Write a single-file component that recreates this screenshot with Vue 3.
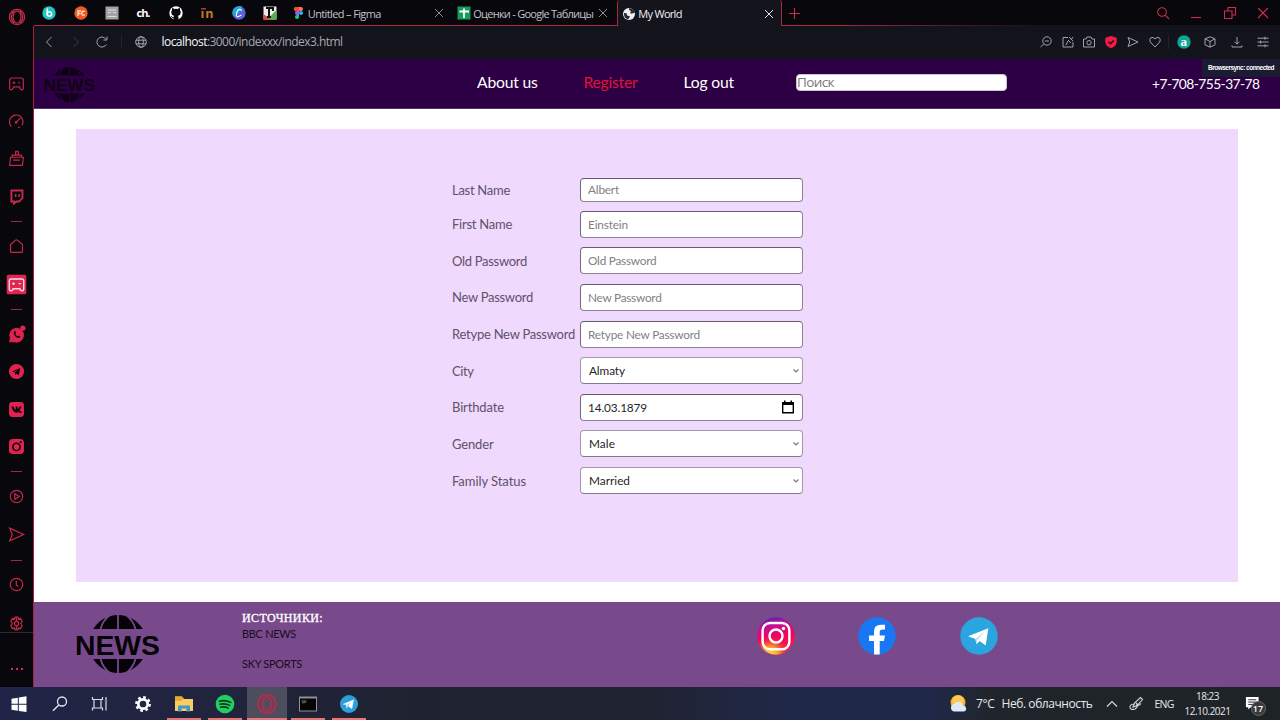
<script setup>
// Spreads a label's letters so that it occupies the given width in pixels.
const vFit = {
  mounted(el, { value }) {
    const count = el.textContent.length
    const width = el.getBoundingClientRect().width
    el.style.letterSpacing = (value - width) / count + 'px'
  },
}

const sideGroups = [
  [
    '<path d="M4.500 3.500h11q2.500 0 2.500 2.500v9q0 2.500-2 2.500-1.500 0-2.500-3.500h-7q-1 3.500-2.500 3.500-2 0-2-2.500V6q0-2.500 2.500-2.500z"/><path d="M7 7.500v3M5.500 9h3M13 8v2"/>',
    '<path d="M4 16a8 8 0 1 1 12.500-1.500M14 17h-2"/><path d="M9.500 11l5-5"/><circle cx="9.500" cy="11" r="1"/>',
    '<path d="M3 8.500h15L17 18H2zM5 8.500V6h11v2.500M9 6V1.500h3V6M6 12h8"/>',
    '<path d="M4 3h13v9l-4 4h-3l-3 2v-2H4z" stroke-width="2.300"/><path d="M9 7v3.500M13 7v3.500" stroke-width="1.800"/>',
  ],
  [
    '<path d="M3 8.500q0-1 1-1.700l4.500-4q1.500-1.300 3 0l4.500 4q1 .7 1 1.700V16q0 1-1 1H4q-1 0-1-1z"/>',
    '<rect x="-1.500" y="-1.500" width="23" height="23" rx="1.800" fill="#dc2752" stroke="none"/><path d="M3.500 3.500h13q2 0 2 2.500v9q0 2.500-2 2.500t-2.500-2.500H6q-.5 2.500-2.500 2.500t-2-2.500V6q0-2.500 2-2.500z" stroke="#ffd8e0" stroke-width="1.600"/><path d="M6.500 7.500v3M5 9h3M12.500 9h2.500" stroke="#ffd8e0" stroke-width="1.600"/>',
  ],
  [
    '<path d="M2 18.500l1-4A8 8 0 1 1 7 18.200z" fill="#e0244f"/><path d="M7 6.500q-1 3 1.500 5.500t5 2l1-1.500-2-1.300-1.300 1q-2.200-1-2.700-3l1-1.200L8.500 6z" fill="#16040c" stroke="none"/><circle cx="17.500" cy="2.500" r="3" fill="#e0244f" stroke="none"/>',
    '<circle cx="10" cy="10" r="8.900" fill="#e0244f" stroke="none"/><path d="M4.500 10L14.500 6l-1.800 8.500-3-2-1.500 1.500-.3-2.800 4-3.500-5 3z" fill="#16040c" stroke="none"/>',
    '<rect x="1.200" y="1.200" width="17.600" height="17.600" rx="4" fill="#e0244f" stroke="none"/><path d="M4 6.500h2.500q1 3 2.500 4v-4h2.300v3.200q1.500-1 2.500-3.200H16q-.7 2.300-2.500 3.700Q15.500 12 16.500 14H13.500q-1-1.500-2.200-2v2Q5.500 14 4 6.500z" fill="#16040c" stroke="none"/>',
    '<rect x="1.200" y="1.200" width="17.600" height="17.600" rx="4.500" fill="#e0244f" stroke="none"/><circle cx="10" cy="10.500" r="4.300" stroke="#16040c" stroke-width="2"/><circle cx="15" cy="4.700" r="1.300" fill="#16040c" stroke="none"/>',
  ],
  [
    '<circle cx="10" cy="10" r="7.300"/><path d="M8 6.700l5.200 3.300L8 13.300z"/>',
    '<path d="M2 2.500L18.500 10 2 17.500 5 10z"/>',
  ],
  [
    '<circle cx="10" cy="10" r="7.300"/><path d="M9.800 5.500v5l2.500 2"/>',
    '<path d="M8.300 2.500h3.400l.6 2.300 2.200-.9 2.200 3.500L15 10l1.700 2.600-2.200 3.500-2.200-.9-.6 2.300H8.300l-.6-2.300-2.200.9-2.200-3.500L5 10 3.300 7.400l2.200-3.500 2.200.9z"/><circle cx="10" cy="10" r="2.500"/><path d="M10 3v4.500M10 12.500V17"/>',
  ],
]

const pins = [
  '<circle cx="8" cy="8" r="6.700" fill="#20c5c4"/><path d="M6.300 3.500v6.800" stroke="#fff" stroke-width="1.700" fill="none"/><circle cx="8.400" cy="9" r="2.200" stroke="#fff" stroke-width="1.500" fill="none"/>',
  '<circle cx="8" cy="8" r="6.700" fill="#f15a22"/><path d="M5 11V6h3M5 8.500h2.500M11.800 6.500q-3-1-3 1.700t3 1.700" stroke="#ffe4d4" stroke-width="1.300" fill="none"/>',
  '<rect x="1.500" y="1.500" width="13" height="13" fill="#a3a3a3"/><path d="M4 5h8M4 7.500h3M9 7.500h3M3.500 11.500h9" stroke="#ddd" fill="none"/>',
  '<text x="0.500" y="12" fill="#fff" font-size="11" font-weight="700" textLength="14" font-family="Open Sans">ch.</text>',
  '<circle cx="8" cy="8" r="6.700" fill="#fff"/><path d="M5.500 15V12q.2-.8.800-1.200-3-.5-3-3.600 0-1.200.8-2.100-.3-1 .1-2 1 0 2.100.9 1.700-.4 3.400 0 1.100-.9 2.100-.9.400 1 .1 2 .8.900.8 2.100 0 3.100-3 3.600.8.700.8 2v2.200z" fill="#09080d"/><path d="M5.700 12.700q-1.700.3-2.300-1.400" fill="none" stroke="#09080d"/>',
  '<text x="1.500" y="12.500" fill="#c57a22" font-size="12.500" font-weight="700" textLength="13" font-family="Open Sans">ın</text><path d="M2 3.800h5" stroke="#b04a35" stroke-width="1.400"/>',
  '<circle cx="8" cy="8" r="6.700" fill="#5563dc"/><path d="M1.500 6.500a6.700 6.700 0 0 1 10-4.500Q8 10 2.500 11.500 1 9 1.500 6.500z" fill="#24a6d4"/><path d="M10.500 6Q10 3.800 8 4.500T5.500 9t2 2.500T10.500 10" stroke="#fff" stroke-width="1.100" fill="none"/>',
  '<path d="M1.500 1.500h13v13h-13z" fill="#eee"/><path d="M5 14.500h9.500V5z" fill="#5cae4c"/><path d="M1.500 9v5.500h7z" fill="#db4b3b"/><path d="M4 3h7v3M7 3.500V13M5 12h4" stroke="#111" stroke-width="2" fill="none"/>',
]

const barIcons = [
  '<circle cx="9" cy="7" r="4.200"/><path d="M5.800 10l-3.300 3M7 7h4"/>',
  '<path d="M8 3.500H3v9.500h10V8"/><path d="M6 11l2-4M9 3l4 4M8 6l3 3M11 6l2-3"/>',
  '<path d="M2.500 5H5l1-2h4l1 2h2.500v8h-11z"/><circle cx="8" cy="8.700" r="2.200"/>',
  '<path d="M8 2.500l5.200 1.600v4.200q0 3.600-5.200 5.600-5.200-2-5.200-5.600V4.100z" fill="#f5194a" stroke="#f5194a"/><path d="M5.500 7.800l2 2 3.300-3.300" stroke="#26101a" stroke-width="1.500"/>',
  '<path d="M3 3.500L13 8 3 12.500 4.700 8z"/>',
  '<path d="M8 13L3.300 8Q1.800 5.500 3.800 3.700 6.300 2.500 8 5q1.700-2.500 4.200-1.300 2 1.800.5 4.300z"/>',
]
const extIcons = [
  '<circle cx="8" cy="8" r="6.700" fill="#12a594" stroke="none"/><text x="4.600" y="11.800" font-size="13" font-weight="700" font-family="Liberation Serif" fill="#fff" stroke="none">a</text>',
  '<path d="M8 2.800l5 2v6L8 13.200l-5-2.400v-6zM3 4.800L8 7.500l5-2.700M8 7.500v5.700"/>',
  '<path d="M8 3v7M5.500 7.700L8 10.200l2.500-2.500M3 11.500V13h10v-1.500"/>',
  '<path d="M2.500 4.200h11M2.500 8h11M2.500 11.800h11M10 2.700v3M5.500 6.500v3M10 10.300v3"/>',
]

const tasks = [
  { icon: '<path d="M2.500 4.700l6.300-1v6H2.500zM9.800 3.500L17.500 2.300v7.400H9.800zM2.500 10.700h6.300v6l-6.300-1zM9.800 10.700h7.700v7.400L9.800 17z" fill="#fff"/>' },
  { icon: '<circle cx="12" cy="7.500" r="4.500" fill="none" stroke="#e4e4ea" stroke-width="1.300"/><path d="M8.800 11L3 16.800" stroke="#e4e4ea" stroke-width="1.400"/>' },
  { icon: '<path d="M2.500 3V5.500H12.500V3M2.500 16.500v-2.500H12.500v2.500M4 5.500v8.500M11 5.500v8.500M16 3v3M16 8v8.500M14.800 7h2.500" fill="none" stroke="#dcdce4" stroke-width="1.200"/>' },
  { icon: '<circle cx="10" cy="10" r="4.700" fill="none" stroke="#fff" stroke-width="2.700"/><circle cx="10" cy="10" r="6.700" fill="none" stroke="#fff" stroke-width="2.400" stroke-dasharray="2.700 2.562"/>' },
  { icon: '<path d="M1 2.500h7l2 2.500h9v12H1z" fill="#f8cf5f"/><path d="M1 2.500h7l1.500 2.500L7 7H1z" fill="#e7a92e"/><path d="M4 17.500v-6h12v6h-3.500v-3h-5v3z" fill="#4598cb"/>', open: true },
  { icon: '<circle cx="10" cy="10" r="9.300" fill="#1ed15f"/><path d="M4.300 7.200q6-1.600 11.500 1.200M5 10.300q5-1.300 9.600 1.100M5.600 13.200q4-1 7.700.9" fill="none" stroke="#14351f" stroke-width="1.600" stroke-linecap="round"/>', open: true },
  { icon: '<ellipse cx="10" cy="10" rx="9" ry="9.300" fill="none" stroke="#b52c4c" stroke-width="1.700"/><ellipse cx="10" cy="10" rx="4.500" ry="7.200" fill="none" stroke="#b52c4c" stroke-width="1.700"/><path d="M6 3.500q-6 6.500 0 13M14 3.500q6 6.500 0 13" fill="none" stroke="#933049"/>', open: true, active: true },
  { icon: '<path d="M1 2.500h18v15H1z" fill="#8d9094"/><path d="M2 4.500h16v12H2z" fill="#050506"/><path d="M3.500 7h5M4 9l4-1" stroke="#777"/>', open: true },
  { icon: '<circle cx="10" cy="10" r="9" fill="#2b9fd9"/><path d="M3.500 10.200L15 5.500 13 15l-3.700-2.700-1.900 2-.5-3.500z" fill="#fff"/><path d="M7.400 14.300l.2-3 5-3.800-3.600 4.700z" fill="#a9cee4"/>', open: true },
]

const fields = [
  { label: 'Last Name', lw: 58, value: 'Albert', vw: 31, kind: 'hint' },
  { label: 'First Name', lw: 60, value: 'Einstein', vw: 40, kind: 'hint' },
  { label: 'Old Password', lw: 75, value: 'Old Password', vw: 68.500, kind: 'hint' },
  { label: 'New Password', lw: 81, value: 'New Password', vw: 73.500, kind: 'hint' },
  { label: 'Retype New Password', lw: 123, value: 'Retype New Password', vw: 112, kind: 'hint' },
  { label: 'City', lw: 21.500, value: 'Almaty', vw: 36, kind: 'select' },
  { label: 'Birthdate', lw: 52, value: '14.03.1879', vw: 59, kind: 'date' },
  { label: 'Gender', lw: 41.500, value: 'Male', vw: 26, kind: 'select' },
  { label: 'Family Status', lw: 74, value: 'Married', vw: 41, kind: 'select' },
]
</script>

<template>
  <div class="screen">
    <div class="browser">
      <aside class="side">
        <svg class="opera" viewBox="0 0 20 20"><ellipse cx="10" cy="10" rx="7.600" ry="7.600" /><ellipse cx="10" cy="10" rx="4" ry="6.200" /><path d="M7 3.700q-5.500 6 0 12.600M13 3.700q5.500 6 0 12.600" /></svg>
        <template v-for="(group, g) in sideGroups" :key="g">
          <i v-if="g" class="dash"></i>
          <div class="group" :class="{ pair: group.length === 2 }">
            <div v-for="(icon, i) in group" :key="i" class="side-cell"><svg viewBox="0 0 20 20" v-html="icon"></svg></div>
          </div>
        </template>
        <div class="dots"><i></i><i></i><i></i></div>
      </aside>

      <div class="window">
        <div class="tabs">
          <div class="pins"><div v-for="(p, i) in pins" :key="i" class="pin"><svg viewBox="0 0 16 16" v-html="p"></svg></div></div>
          <div class="tab figma">
            <svg viewBox="0 0 10 14"><path d="M1 1h4v4H3a2 2 0 0 1-2-4z" fill="#f24e1e" /><path d="M5 1h2a2 2 0 0 1 0 4H5z" fill="#ff7262" /><path d="M5 5H3a2 2 0 0 0 0 4h2z" fill="#a259ff" /><circle cx="7" cy="7" r="2" fill="#1abcfe" /><path d="M5 9H3a2 2 0 1 0 2 2z" fill="#0acf83" /></svg>
            <span v-fit="73">Untitled – Figma</span>
            <svg class="x" viewBox="0 0 10 10"><path d="M1 1l8 8M9 1L1 9" /></svg>
          </div>
          <div class="tab sheets">
            <svg viewBox="0 0 14 14"><path d="M.5.5h13v13H.5z" fill="#169b5b" /><path d="M7 2.500v9.500M2.500 5.500h9.500" stroke="#fff" stroke-width="1.800" /></svg>
            <span v-fit="120">Оценки - Google Таблицы</span>
            <svg class="x" viewBox="0 0 10 10"><path d="M1 1l8 8M9 1L1 9" /></svg>
          </div>
          <div class="tab current">
            <svg viewBox="0 0 14 14"><circle cx="7" cy="7" r="6" fill="#eef0f4" /><path d="M2 6q3-.5 3 1.500T7 9t-1 3.500Q1.500 11 2 6zM7 1.300q-.5 2 1 2.200t.5 2 2.500.8 2-1Q11 1 7 1.300z" fill="#272832" /></svg>
            <span v-fit="43.500">My World</span>
            <svg class="x" viewBox="0 0 10 10"><path d="M1 1l8 8M9 1L1 9" /></svg>
          </div>
          <svg class="plus" viewBox="0 0 12 12"><path d="M6.500 1v11M1 6.500h11" /></svg>
          <div class="controls">
            <svg viewBox="0 0 14 14"><circle cx="6" cy="6" r="4.300" /><path d="M9.200 9.200L13 13" /></svg>
            <svg viewBox="0 0 14 14"><path d="M2 11.500h10" /></svg>
            <svg viewBox="0 0 14 14"><path d="M1.500 5h7.500v7.500H1.500zM5 5V1.500h7.500V9H9" /></svg>
            <svg viewBox="0 0 14 14"><path d="M2 2l10 10M12 2L2 12" /></svg>
          </div>
        </div>

        <div class="address">
          <div class="navs">
            <svg viewBox="0 0 14 14"><path d="M9.500 2l-5 5 5 5" /></svg>
            <svg class="dim" viewBox="0 0 14 14"><path d="M4.500 2l5 5-5 5" /></svg>
            <svg viewBox="0 0 14 14"><path d="M11.300 9.500a5 5 0 1 1-.4-5.500M12 1.500V5H8.500" /></svg>
          </div>
          <i class="rule"></i>
          <svg class="globe" viewBox="0 0 14 14"><circle cx="7" cy="7" r="5.300" /><ellipse cx="7" cy="7" rx="2.300" ry="5.300" /><path d="M2 5.200h10M2 8.800h10" /></svg>
          <span v-fit="181" class="url"><b>localhost</b>:3000/indexxx/index3.html</span>
          <div class="bar-icons"><svg v-for="(b, i) in barIcons" :key="i" viewBox="0 0 16 16" v-html="b"></svg></div>
          <i class="rule short"></i>
          <div class="ext-icons"><svg v-for="(b, i) in extIcons" :key="i" viewBox="0 0 16 16" v-html="b"></svg></div>
        </div>

        <header class="top">
          <svg class="logo small" viewBox="0 0 84 58"><path d="M17.200 14A29 29 0 0 1 66.800 14ZM17.200 44A29 29 0 0 0 66.800 44Z" /><path class="gap" d="M42 0v14M42 44v14M34 0q-7 5-9.500 14M50 0q7 5 9.500 14M34 58q-7-5-9.500-14M50 58q7-5 9.500-14" /><text x="-1" y="39.500" textLength="85" lengthAdjust="spacingAndGlyphs">NEWS</text></svg>
          <nav>
            <a><span v-fit="60.500">About us</span></a>
            <a class="red"><span v-fit="54">Register</span></a>
            <a><span v-fit="50.500">Log out</span></a>
          </nav>
          <div class="search"><span v-fit="37">Поиск</span></div>
          <span v-fit="107.500" class="phone">+7-708-755-37-78</span>
          <div class="sync"><span v-fit="66">Browsersync: connected</span></div>
        </header>

        <main>
          <section class="panel">
            <div class="form">
              <div v-for="f in fields" :key="f.label" class="row">
                <label><span v-fit="f.lw">{{ f.label }}</span></label>
                <div class="field" :class="f.kind">
                  <span v-fit="f.vw">{{ f.value }}</span>
                  <svg v-if="f.kind === 'select'" class="chev" viewBox="0 0 8 6"><path d="M1.500 1.500L4 4l2.500-2.500" /></svg>
                  <svg v-if="f.kind === 'date'" class="cal" viewBox="0 0 14 14"><path d="M1.700 2.700h10.600v10H1.700z" fill="none" stroke="#000" stroke-width="1.400" /><path d="M1 2h12v3H1zM3 .5h1.500V3H3zM9.500.5H11V3H9.500z" /></svg>
                </div>
              </div>
            </div>
          </section>
        </main>

        <footer>
          <svg class="logo" viewBox="0 0 84 58"><path d="M17.200 14A29 29 0 0 1 66.800 14ZM17.200 44A29 29 0 0 0 66.800 44Z" /><path class="gap" d="M42 0v14M42 44v14M34 0q-7 5-9.500 14M50 0q7 5 9.500 14M34 58q-7-5-9.500-14M50 58q7-5 9.500-14" /><text x="-1" y="39.500" textLength="85" lengthAdjust="spacingAndGlyphs">NEWS</text></svg>
          <div class="sources">
            <h4><span v-fit="81">ИСТОЧНИКИ:</span></h4>
            <p><span v-fit="54">BBC NEWS</span></p>
            <p class="second"><span v-fit="60">SKY SPORTS</span></p>
          </div>
          <div class="social">
            <svg viewBox="0 0 38 38">
              <defs>
                <linearGradient id="ig-base" x1="0" y1="0" x2="0.200" y2="1"><stop offset="0" stop-color="#4a23c4" /><stop offset=".3" stop-color="#c50f90" /><stop offset=".6" stop-color="#f0065c" /><stop offset="1" stop-color="#f5214a" /></linearGradient>
                <radialGradient id="ig-warm" cx=".35" cy="1" r=".5"><stop offset="0" stop-color="#ffe04b" /><stop offset=".45" stop-color="#fb9b25" /><stop offset="1" stop-color="#f5214a" stop-opacity="0" /></radialGradient>
              </defs>
              <circle cx="19" cy="19" r="18.700" fill="url(#ig-base)" /><circle cx="19" cy="19" r="18.700" fill="url(#ig-warm)" />
              <rect x="5.600" y="6" width="26.800" height="26.300" rx="7.500" fill="none" stroke="#fff" stroke-width="2.400" /><circle cx="19" cy="19" r="6.500" fill="none" stroke="#fff" stroke-width="2.400" /><circle cx="26.500" cy="11.500" r="1.700" fill="#fff" />
            </svg>
            <svg viewBox="0 0 38 38"><circle cx="19" cy="19" r="18.700" fill="#1877f2" /><path d="M16 37.500V24h-5v-5.500h5v-4.300Q16 7.700 22.700 7.700h4.300v4.800h-2.500q-2.800 0-2.800 2.800v3.200H27L26 24h-4.300v13.500z" fill="#fff" /></svg>
            <svg viewBox="0 0 38 38"><circle cx="19" cy="19" r="18.700" fill="#2ba5df" /><path d="M8 19.200L28.300 11.200 25.700 28.500 19.600 24.100 16.500 27.200 15.400 22z" fill="#fff" /><path d="M15.400 22l10-8-8.300 9.300-.6 3.900z" fill="#bcdcef" /></svg>
          </div>
        </footer>
      </div>
    </div>

    <div class="taskbar">
      <div v-for="(t, i) in tasks" :key="i" class="task" :class="{ open: t.open, active: t.active }"><svg viewBox="0 0 20 20" v-html="t.icon"></svg></div>
      <div class="tray">
        <svg class="weather" viewBox="0 0 20 20"><circle cx="9" cy="8.500" r="7.500" fill="#f6ad2b" /><circle cx="9" cy="7" r="5.800" fill="#fdc953" /><path d="M5 17.500a3.800 3.800 0 0 1 .4-7.500 4.500 4.500 0 0 1 8.400 1.500 3 3 0 0 1 .7 6z" fill="#dbeaf6" /></svg>
        <span v-fit="18.500" class="temp">7°C</span>
        <span v-fit="91" class="sky">Неб. облачность</span>
        <svg class="up" viewBox="0 0 12 8"><path d="M1 6.500l5-5 5 5" /></svg>
        <svg class="pen" viewBox="0 0 16 16"><path d="M5 11l1.500-4L12.500 1.500l2 2L9 9.500 5 11zM8 7l2 2M6 8Q1.500 8.500 2 11.500t5 1.500q4-3 1-4M9 10q3-1 4-2.500" /></svg>
        <span v-fit="19" class="lang">ENG</span>
        <div class="clock"><span v-fit="23">18:23</span><span v-fit="46">12.10.2021</span></div>
        <div class="notice">
          <svg viewBox="0 0 16 16"><path d="M1 1h13.500v11H6l-2.500 2.500V12H1z" fill="#fff" /><path d="M3.500 4h8.500M3.500 6.500h8.500M3.500 9h5" stroke="#25272b" /></svg>
          <b>17</b>
        </div>
      </div>
    </div>
  </div>
</template>

<style>
html, body { background: #08080c; overflow: hidden; }
</style>

<style scoped>
* { box-sizing: border-box; }
.screen { width: 1280px; height: 720px; display: flex; flex-direction: column; font-family: "Open Sans", "Noto Sans", sans-serif; white-space: nowrap; overflow: hidden; }
svg { display: block; flex: none; overflow: visible; }
span { flex: none; }
.browser { height: 687px; display: flex; background: #08070c; }
.side { width: 34px; padding-right: 1px; display: flex; flex-direction: column; align-items: center; background: linear-gradient(#a3233f, #a3233f) 33px 26px / 1px 100% no-repeat, linear-gradient(#08070c 0 632px, #2b2b30 632px 633px, #08070c 633px); }
.side svg { width: 17px; height: 17px; fill: none; stroke: #c42a4b; stroke-width: 1.400; }
.side .opera { width: 20px; height: 20px; margin-top: 7px; margin-bottom: 38px; stroke-width: 1.300; }
.side-cell { height: 37.500px; display: flex; align-items: center; }
.pair .side-cell { height: 38.200px; }
.dash { width: 11px; height: 1px; margin: 6px 0 5px; background: #a02644; }
.group + .dash { flex: none; }
.dots { display: flex; gap: 3px; margin-top: 26px; }
.dots i { width: 2px; height: 2px; background: #dc2e50; }
.window { width: 1246px; display: flex; flex-direction: column; }

.tabs { height: 26px; display: flex; align-items: center; padding-bottom: 1px; background: linear-gradient(90deg, #a82846 760px, #a82846 800px, #16111a 1000px) 0 25px / 100% 1px no-repeat, #08070c; font-size: 11px; color: #c3c2c9; }
.pins { display: flex; }
.pin { width: 31.600px; display: flex; justify-content: center; }
.pin svg { width: 16px; height: 16px; margin-right: 1px; }
.tab { display: flex; align-items: center; height: 25px; padding-top: 1px; }
.tab > svg:first-child { width: 14px; height: 14px; margin-right: 2.500px; }
.tab.figma { width: 164px; padding-left: 7px; }
.tab.figma > svg:first-child { width: 10px; margin-right: 4px; }
.tab .x { width: 10px; height: 10px; margin-left: auto; stroke: #8e8d95; stroke-width: 1; }
.tab.figma .x { margin-right: 7px; }
.tab.sheets { width: 166px; padding-left: 6px; padding-right: 9px; }
.tab.current { width: 165px; height: 26px; margin-bottom: -1px; padding: 1px 7px 0 4px; background: #14141c; border: solid #a82846; border-width: 0 1px; color: #f0f0f4; border-radius: 3px 3px 0 0; }
.current .x { stroke: #e3e3e8; }
.plus { width: 12px; height: 12px; margin-left: 6px; fill: none; stroke: #c92d4b; stroke-width: 1; }
.controls { display: flex; gap: 19.400px; margin: 0 10px 0 auto; }
.controls svg { width: 14px; height: 14px; fill: none; stroke: #d02d4e; stroke-width: 1.100; }

.address { height: 33px; display: flex; align-items: center; background: #13131b; padding-right: 9px; padding-bottom: 2px; }
.address svg { fill: none; stroke: #a2a2aa; stroke-width: 1; }
.navs { display: flex; gap: 12.500px; margin-left: 8px; }
.navs svg, .globe { width: 14px; height: 14px; }
.navs .dim { stroke: #3b3b44; }
.rule { width: 1px; height: 14px; background: #24242c; margin: 0 12px 0 11.500px; }
.url { margin-left: 14px; font-size: 12px; color: #a8a8b0; }
.url b { font-weight: 400; color: #f6f6f8; }
.bar-icons { display: flex; gap: 5.700px; margin-left: auto; }
.bar-icons svg, .ext-icons svg { width: 16px; height: 16px; }
.rule.short { margin: 0 7px 0 5px; }
.ext-icons { display: flex; gap: 10.500px; }

.top { height: 50px; background: #2d0045; border-bottom: 1px solid #55336a; position: relative; display: flex; align-items: center; color: #fff; font-family: Lato, "Open Sans", sans-serif; font-size: 15.700px; padding-bottom: 3px; }
.logo { width: 84px; height: 58px; fill: #050308; --bg: #784a8b; }
.logo text { font: 700 28.500px "Liberation Sans", Arial, sans-serif; }
.gap { fill: none; stroke: var(--bg); stroke-width: 1.800; }
.logo.small { width: 51px; height: 35px; margin-left: 10px; margin-top: 4px; fill: #100216; --bg: #2d0045; }
nav { display: flex; gap: 46px; margin-left: 382px; line-height: 20px; }
nav a { width: auto; }
nav .red { color: #e01237; }
.search { width: 211px; height: 17px; margin-left: 62px; background: #fff; border-radius: 4px; border: 1px solid #cfc4d5; color: #777; font: 13.500px/15px "Open Sans", sans-serif; padding-left: 0; }
.phone { margin: 2px 20.500px 0 auto; font-size: 13.800px; }
.sync { position: absolute; top: 0; right: 0; width: 78px; height: 18px; background: #1b1b32; color: #fff; font: 700 6.500px/18px "Liberation Sans", Arial, sans-serif; padding-left: 6px; }

main { height: 493px; background: #fff; padding: 20px 42px 20px; }
.panel { height: 453px; background: #efd9fd; padding: 49px 0 0 376px; }
.form { width: 352px; display: flex; flex-direction: column; gap: 9.650px; font-family: Lato, sans-serif; font-size: 13px; color: #615269; }
.row { display: flex; height: 27px; align-items: center; }
.row:first-child { height: 23px; }
.row:first-child .field { height: 24px; }
label { width: 128px; }
.field { width: 223px; height: 27px; display: flex; align-items: center; background: #fff; border: 1px solid #8f8196; border-top-color: #685a70; border-left-color: #78697f; border-radius: 4px; padding: 0 6px 0 7px; font-size: 11.800px; color: #262428; }
.field.hint { color: #828085; }
.field.select { border-color: #a396aa; border-bottom-color: #85788c; padding-left: 8px; padding-right: 2px; }
.chev { width: 8px; height: 6px; margin-left: auto; fill: none; stroke: #7a7680; stroke-width: 1.200; }
.cal { width: 14px; height: 14px; margin-left: auto; margin-right: 1px; }

footer { height: 85px; background: #784a8b; display: flex; align-items: flex-start; }
footer .logo { margin: 12.500px 0 0 42px; }
.sources { width: 515px; margin: 8.500px 0 0 82px; color: #1a0d20; font-family: Lato, sans-serif; font-size: 11px; line-height: 15px; }
h4, p { margin: 0; }
h4 { font: 400 12px/15px "Liberation Serif", "Times New Roman", serif; color: #fff; -webkit-text-stroke: .3px #fff; }
.second { margin-top: 15.500px; }
.social { display: flex; gap: 63.400px; margin-top: 14.500px; }
.social svg { width: 38px; height: 38px; }

.taskbar { height: 33px; display: flex; background: linear-gradient(90deg, #202547, #21243c 250px, #1f222f 420px, #202332 650px, #20294a 800px, #202849 930px, #20252c 990px, #1e2326); }
.task { width: 40px; margin-left: -1px; margin-right: 2.300px; display: flex; align-items: center; justify-content: center; position: relative; }
.task svg { width: 20px; height: 20px; }
.task:nth-child(3) svg { margin-right: 3px; }
.task.open::after { content: ""; position: absolute; left: 3px; right: 3px; bottom: 0; height: 2px; background: #e7767b; }
.task.active { background: #4c4e5d; }
.task.active::after { left: 0; right: 0; }
.tray { display: flex; align-items: center; margin-left: auto; color: #e8e8ea; font-size: 12px; width: 331px; }
.weather { width: 20px; height: 20px; }
.temp { margin-left: 7px; }
.sky { margin-left: 7px; }
.up { width: 12px; height: 8px; margin-left: 13px; fill: none; stroke: #d8d8da; stroke-width: 1.200; }
.pen { width: 16px; height: 16px; margin-left: 10px; fill: none; stroke: #d8d8da; stroke-width: 1.100; }
.lang { margin-left: 11px; font-size: 10.500px; }
.clock { width: 48px; margin-left: 10px; display: flex; flex-direction: column; align-items: center; font-size: 10px; line-height: 15px; }
.notice { position: relative; margin-left: 13px; }
.notice svg { width: 15px; height: 15px; }
.notice b { position: absolute; left: 6px; top: 5px; width: 15px; height: 15px; border-radius: 8px; background: #37393d; border: 1px solid #65676a; color: #fff; font-size: 9px; font-weight: 600; line-height: 13px; text-align: center; }
</style>
